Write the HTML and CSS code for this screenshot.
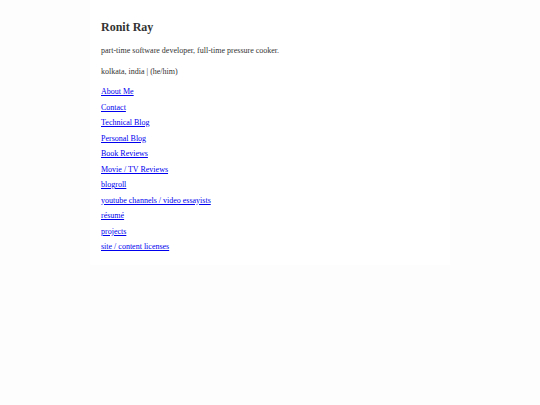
FILE: index.html
```html
<!DOCTYPE html>
<html lang="en">
<head>
<meta charset="utf-8">
<title>Ronit Ray</title>
<link rel="stylesheet" href="styles.css">
</head>
<body>
<main class="page">
  <h1 class="name">Ronit Ray</h1>
  <p class="tagline">part-time software developer, full-time pressure cooker.</p>
  <p class="tagline">kolkata, india | (he/him)</p>
  <nav class="links">
    <a href="#">About Me</a>
    <a href="#">Contact</a>
    <a href="#">Technical Blog</a>
    <a href="#">Personal Blog</a>
    <a href="#">Book Reviews</a>
    <a href="#">Movie / TV Reviews</a>
    <a href="#">blogroll</a>
    <a href="#">youtube channels / video essayists</a>
    <a href="#">résumé</a>
    <a href="#">projects</a>
    <a href="#">site / content licenses</a>
  </nav>
</main>
</body>
</html>
```

FILE: styles.css
```css
html, body {
  margin: 0;
  padding: 0;
}
body {
  background: #fdfdfd;
  font-family: "Liberation Serif", "Times New Roman", serif;
  font-size: 8px;
  color: #333;
  min-height: 405px;
}
.page {
  width: 338px;
  margin: 0 auto;
  padding: 20px 11px 14px;
  background: #fff;
}
.name {
  margin: 0 0 12px;
  font-size: 12px;
  line-height: 14px;
  font-weight: bold;
}
.tagline {
  margin: 0 0 12px;
  line-height: 9px;
}
.tagline + .tagline {
  margin-bottom: 11px;
}
.links {
  display: flex;
  flex-direction: column;
  align-items: flex-start;
  gap: 6.5px;
  line-height: 9px;
}
.links a {
  color: #0000ee;
}
```
